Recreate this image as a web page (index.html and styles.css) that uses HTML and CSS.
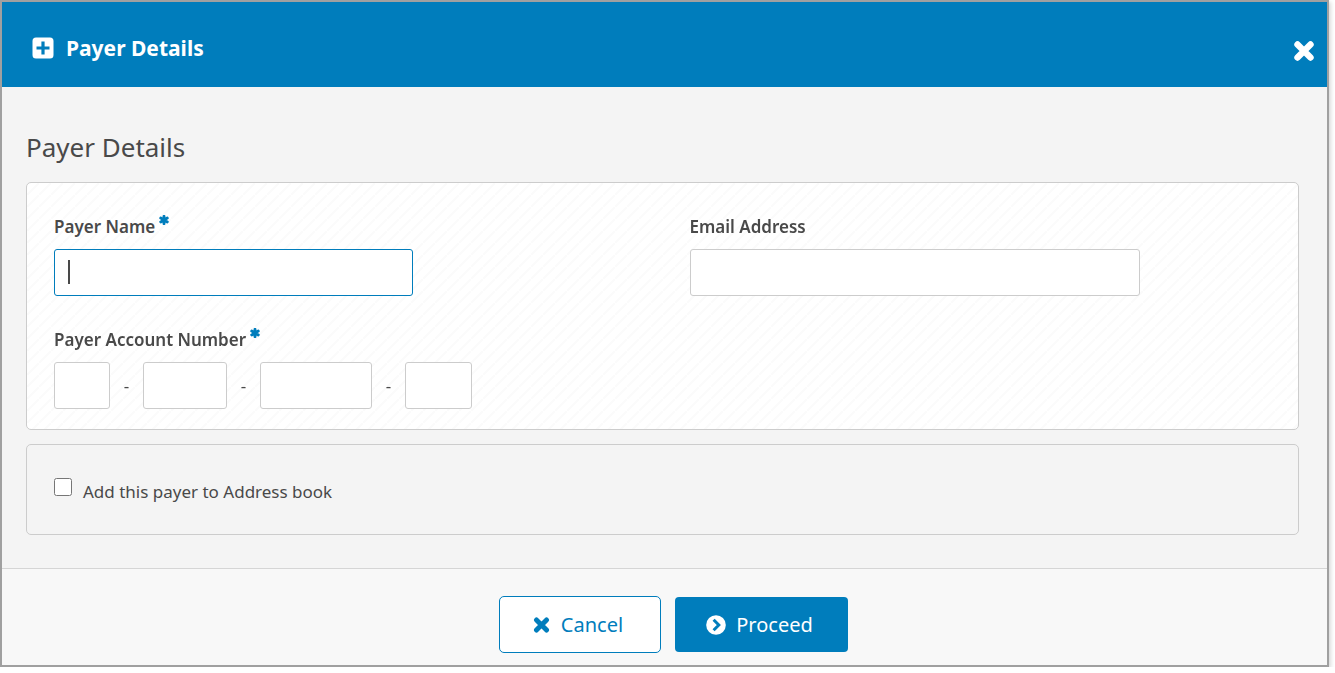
FILE: index.html
```html
<!DOCTYPE html>
<html lang="en">
<head>
	<meta charset="UTF-8">
	<meta name="viewport" content="width=device-width, initial-scale=1.0">
	<title>Payer Details</title>
	<link rel="stylesheet" href="styles.css">
</head>
<body>
	<!-- Shared icons -->
	<svg class="icon-defs" aria-hidden="true">
		<symbol id="icon-times" viewBox="0 0 22 20">
			<path d="M4.5 3.5L17.5 16.5M17.5 3.5L4.5 16.5" fill="none" stroke="currentColor" stroke-width="6.4" stroke-linecap="round"/>
		</symbol>
		<symbol id="icon-asterisk" viewBox="0 0 10 10">
			<path d="M5 1.3V8.7M1.7 3.1L8.3 6.9M8.3 3.1L1.7 6.9" fill="none" stroke="currentColor" stroke-width="2.9" stroke-linecap="round"/>
		</symbol>
	</svg>

	<div class="dialog" role="dialog" aria-labelledby="dialog-title">
		<header class="dialog-header">
			<svg class="icon-plus" viewBox="0 0 22 22" aria-hidden="true">
				<path fill="#fff" fill-rule="evenodd" d="M4 0.5H18A3.5 3.5 0 0 1 21.5 4V18A3.5 3.5 0 0 1 18 21.5H4A3.5 3.5 0 0 1 0.5 18V4A3.5 3.5 0 0 1 4 0.5ZM9.4 4.5V9.4H4.5V12.6H9.4V17.5H12.6V12.6H17.5V9.4H12.6V4.5Z"/>
			</svg>
			<h1 id="dialog-title">Payer Details</h1>
			<button type="button" class="close" aria-label="Close">
				<svg class="icon-close" aria-hidden="true"><use href="#icon-times"/></svg>
			</button>
		</header>

		<form id="payer-form">
			<div class="dialog-body">
				<h2>Payer Details</h2>

				<div class="panel panel-fields">
					<div class="field">
						<label for="payer-name">Payer Name<svg class="required" aria-hidden="true"><use href="#icon-asterisk"/></svg></label>
						<input type="text" id="payer-name" name="payer-name" class="input-name active" required autofocus>
					</div>
					<div class="field">
						<label for="email">Email Address</label>
						<input type="email" id="email" name="email" class="input-email">
					</div>
					<div class="field">
						<label for="bank">Payer Account Number<svg class="required" aria-hidden="true"><use href="#icon-asterisk"/></svg></label>
						<div class="account">
							<input type="text" id="bank" name="bank" class="input-bank" maxlength="2" aria-label="Bank">
							<span>-</span>
							<input type="text" name="branch" class="input-branch" maxlength="4" aria-label="Branch">
							<span>-</span>
							<input type="text" name="account" class="input-account" maxlength="7" aria-label="Account">
							<span>-</span>
							<input type="text" name="suffix" class="input-suffix" maxlength="3" aria-label="Suffix">
						</div>
					</div>
				</div>

				<div class="panel panel-save">
					<input type="checkbox" id="save-payer" name="save-payer">
					<label for="save-payer">Add this payer to Address book</label>
				</div>
			</div>

			<footer class="dialog-footer">
				<button type="button" class="btn btn-cancel">
					<svg class="icon-cancel" aria-hidden="true"><use href="#icon-times"/></svg>
					Cancel
				</button>
				<button type="submit" class="btn btn-proceed">
					<svg class="icon-proceed" viewBox="0 0 20 20" aria-hidden="true">
						<circle cx="10" cy="10" r="9.8" fill="#fff"/>
						<path d="M7.6 4.8L12.8 10L7.6 15.2" fill="none" stroke="#007dbc" stroke-width="3"/>
					</svg>
					Proceed
				</button>
			</footer>
		</form>
	</div>
</body>
</html>
```
FILE: styles.css
```css
* {
	box-sizing: border-box;
}

body {
	background-color: #fff;
	color: #494949;
	font-family: "Noto Sans", "Open Sans", sans-serif;
	font-size: 17px;
	margin: 0;
}

.icon-defs {
	position: absolute;
	width: 0;
	height: 0;
}

.dialog {
	margin-right: 6px;
	border: 2px solid #a0a0a0;
	background-color: #f4f4f4;
	box-shadow: 2px 2px 4px rgba(0, 0, 0, 0.15);
}

.dialog-header {
	display: flex;
	align-items: center;
	gap: 12px;
	height: 85px;
	padding: 0 12px 0 30px;
	background-color: #007dbc;
	color: #fff;
}

.icon-plus {
	width: 22px;
	height: 22px;
	margin-top: 6px;
}

h1 {
	margin: 6px 0 0;
	font-size: 21px;
	line-height: 28px;
	font-weight: 700;
}

.close {
	display: flex;
	margin: 12px 0 0 auto;
	padding: 0;
	border: 0;
	background: none;
	color: #fff;
	cursor: pointer;
}

.icon-close {
	width: 22px;
	height: 20px;
}

.dialog-body {
	padding: 43px 28px 33px 24px;
}

h2 {
	margin: 0 0 18px;
	font-size: 26px;
	line-height: 34px;
	font-weight: 400;
}

.panel {
	border: 1px solid #ccc;
	border-radius: 5px;
}

.panel-fields {
	display: grid;
	grid-template-columns: 1fr 1fr;
	row-gap: 32px;
	padding: 32px 0 20px;
	background: linear-gradient(135deg, #fff 44%, #fbfbfb 44%, #fbfbfb 56%, #fff 56%) 0 0 / 12px 12px;
}

.field {
	padding: 0 27px;
}

.field label {
	display: block;
	margin-bottom: 10px;
	line-height: 24px;
	font-weight: 600;
}

.required {
	width: 10px;
	height: 10px;
	margin-left: 4px;
	color: #007dbc;
	vertical-align: 8px;
}

input[type="text"],
input[type="email"] {
	display: block;
	height: 47px;
	max-width: 100%;
	padding: 0 13px;
	border: 1px solid #ccc;
	border-radius: 3px;
	background-color: #fff;
	color: #494949;
	font: inherit;
	outline: none;
}

input.active {
	border-color: #007dbc;
	background: linear-gradient(#494949, #494949) 13px 10px / 2px 24px no-repeat #fff;
	caret-color: transparent;
}

.input-name {
	width: 359px;
}

.input-email {
	width: 450px;
}

.account {
	display: flex;
	align-items: center;
}

.account span {
	width: 33px;
	text-align: center;
}

.input-bank {
	width: 56px;
}

.input-branch {
	width: 84px;
}

.input-account {
	width: 112px;
}

.input-suffix {
	width: 67px;
}

.panel-save {
	display: flex;
	gap: 11px;
	margin-top: 14px;
	padding: 33px 27px 28px;
}

.panel-save input {
	width: 18px;
	height: 18px;
	margin: 0;
}

.panel-save label {
	line-height: 28px;
}

.dialog-footer {
	display: flex;
	align-items: center;
	justify-content: center;
	gap: 14px;
	padding: 27px 0 12px 18px;
	border-top: 1px solid #d5d5d5;
	background-color: #f8f8f8;
}

.btn {
	display: flex;
	align-items: center;
	justify-content: center;
	padding: 0 4px 0 0;
	border: 0;
	border-radius: 4px;
	font-family: inherit;
	font-size: 20px;
	line-height: 28px;
	cursor: pointer;
}

.btn-cancel {
	gap: 11px;
	width: 162px;
	height: 57px;
	border: 1px solid #007dbc;
	border-radius: 5px;
	background-color: #fff;
	color: #007dbc;
}

.btn-proceed {
	gap: 10px;
	width: 173px;
	height: 55px;
	background-color: #007dbc;
	color: #fff;
}

.icon-cancel {
	width: 17px;
	height: 16px;
}

.icon-proceed {
	width: 20px;
	height: 20px;
}
```
